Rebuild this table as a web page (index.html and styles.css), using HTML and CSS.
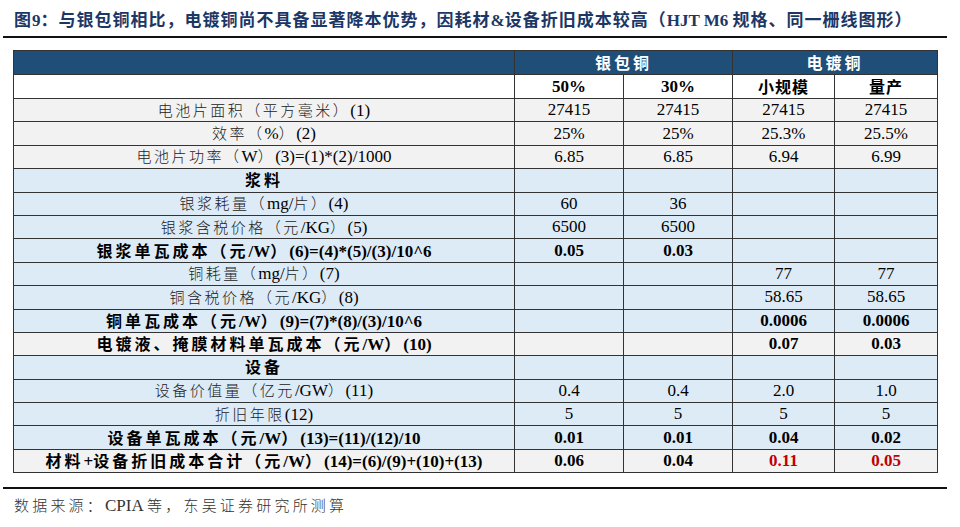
FILE: index.html
```html
<!DOCTYPE html>
<html lang="zh">
<head>
<meta charset="utf-8">
<link rel="stylesheet" href="styles.css">
</head>
<body>
<div class="title"><span class="zh">图</span>9<span class="zh">：与银包铜相比，电镀铜尚不具备显著降本优势，因耗材</span>&amp;<span class="zh">设备折旧成本较高（</span>HJT M6 <span class="zh">规格、同一栅线图形）</span></div>
<div class="rule"></div>
<table class="tbl">
  <colgroup>
    <col class="c0"><col class="c1"><col class="c2"><col class="c3"><col class="c4">
  </colgroup>
  <tr class="h1">
    <td></td>
    <td colspan="2"><span class="zh">银包铜</span></td>
    <td colspan="2"><span class="zh">电镀铜</span></td>
  </tr>
  <tr class="h2">
    <td></td>
    <td>50%</td><td>30%</td><td><span class="zh">小规模</span></td><td><span class="zh">量产</span></td>
  </tr>
  <tr class="g">
    <td><span class="zh">电池片面积（平方毫米）</span>(1)</td>
    <td>27415</td><td>27415</td><td>27415</td><td>27415</td>
  </tr>
  <tr class="g">
    <td><span class="zh">效率（</span>%<span class="zh">）</span>(2)</td>
    <td>25%</td><td>25%</td><td>25.3%</td><td>25.5%</td>
  </tr>
  <tr class="g">
    <td><span class="zh">电池片功率（</span>W<span class="zh">）</span>(3)=(1)*(2)/1000</td>
    <td>6.85</td><td>6.85</td><td>6.94</td><td>6.99</td>
  </tr>
  <tr class="b sec">
    <td><span class="zh">浆料</span></td>
    <td></td><td></td><td></td><td></td>
  </tr>
  <tr class="b">
    <td><span class="zh">银浆耗量（</span>mg/<span class="zh">片）</span>(4)</td>
    <td>60</td><td>36</td><td></td><td></td>
  </tr>
  <tr class="b">
    <td><span class="zh">银浆含税价格（元</span>/KG<span class="zh">）</span>(5)</td>
    <td>6500</td><td>6500</td><td></td><td></td>
  </tr>
  <tr class="b bold">
    <td><span class="zh">银浆单瓦成本（元</span>/W<span class="zh">）</span>(6)=(4)*(5)/(3)/10^6</td>
    <td>0.05</td><td>0.03</td><td></td><td></td>
  </tr>
  <tr class="b">
    <td><span class="zh">铜耗量（</span>mg/<span class="zh">片）</span>(7)</td>
    <td></td><td></td><td>77</td><td>77</td>
  </tr>
  <tr class="b">
    <td><span class="zh">铜含税价格（元</span>/KG<span class="zh">）</span>(8)</td>
    <td></td><td></td><td>58.65</td><td>58.65</td>
  </tr>
  <tr class="b bold">
    <td><span class="zh">铜单瓦成本（元</span>/W<span class="zh">）</span>(9)=(7)*(8)/(3)/10^6</td>
    <td></td><td></td><td>0.0006</td><td>0.0006</td>
  </tr>
  <tr class="g bold">
    <td><span class="zh">电镀液、掩膜材料单瓦成本（元</span>/W<span class="zh">）</span>(10)</td>
    <td></td><td></td><td>0.07</td><td>0.03</td>
  </tr>
  <tr class="b sec">
    <td><span class="zh">设备</span></td>
    <td></td><td></td><td></td><td></td>
  </tr>
  <tr class="b">
    <td><span class="zh">设备价值量（亿元</span>/GW<span class="zh">）</span>(11)</td>
    <td>0.4</td><td>0.4</td><td>2.0</td><td>1.0</td>
  </tr>
  <tr class="b">
    <td><span class="zh">折旧年限</span>(12)</td>
    <td>5</td><td>5</td><td>5</td><td>5</td>
  </tr>
  <tr class="b bold">
    <td><span class="zh">设备单瓦成本（元</span>/W<span class="zh">）</span>(13)=(11)/(12)/10</td>
    <td>0.01</td><td>0.01</td><td>0.04</td><td>0.02</td>
  </tr>
  <tr class="g bold">
    <td><span class="zh">材料</span>+<span class="zh">设备折旧成本合计（元</span>/W<span class="zh">）</span>(14)=(6)/(9)+(10)+(13)</td>
    <td>0.06</td><td>0.04</td><td class="red">0.11</td><td class="red">0.05</td>
  </tr>
</table>
<div class="rule2"></div>
<div class="source"><span class="zh">数据来源：</span>CPIA <span class="zh">等，东吴证券研究所测算</span></div>
</body>
</html>
```

FILE: styles.css
```css
html, body {
  margin: 0;
  padding: 0;
  background: #ffffff;
}
body {
  width: 960px;
  height: 527px;
  overflow: hidden;
  font-family: "Liberation Serif", "Noto Sans CJK SC", serif;
  color: #000;
}
.zh {
  font-family: "Noto Sans CJK SC", sans-serif;
}
.title {
  height: 36px;
  line-height: 38px;
  padding-left: 14px;
  font-size: 17px;
  font-weight: bold;
  color: #1c3766;
  white-space: nowrap;
}
.title .zh {
  letter-spacing: 1px;
}
.rule {
  margin: 0 13px 0 3px;
  border-top: 2px solid #111;
}
.tbl {
  margin: 12px 0 0 13px;
  width: 924px;
  table-layout: fixed;
  border-collapse: collapse;
  border: 1px solid #6b6b6b;
  font-size: 17px;
}
.c0 { width: 501px; }
.c1 { width: 109px; }
.c2 { width: 109px; }
.c3 { width: 102px; }
.c4 { width: 103px; }
.tbl td {
  border: 1px solid #333;
  padding: 0;
  text-align: center;
  vertical-align: middle;
  white-space: nowrap;
  line-height: 20px;
}
.tbl td .zh {
  font-size: 15px;
  font-weight: 300;
  letter-spacing: 2.5px;
  color: #222;
}
.tbl tr { height: 23.4px; }
.tbl tr.h1 { height: 24px; background: #1f4e79; }
.tbl tr.h1 td { color: #fff; font-weight: bold; }
.tbl tr.h1 td .zh { color: #fff; font-size: 16px; letter-spacing: 3px; font-weight: bold; }
.tbl tr.h2 { height: 24px; background: #ffffff; font-weight: bold; }
.tbl tr.h2 td .zh { font-weight: bold; color: #000; font-size: 16px; letter-spacing: 1px; }
.tbl tr.g { background: #f2f2f2; }
.tbl tr.b { background: #ddebf7; }
.tbl tr.bold td { font-weight: bold; }
.tbl tr.bold td .zh { font-weight: bold; color: #000; font-size: 16px; letter-spacing: 3px; }
.tbl tr.sec td .zh { font-weight: bold; color: #000; font-size: 16px; letter-spacing: 3px; }
.tbl td.red { color: #c00000; }
.rule2 {
  margin: 14px 13px 0 3px;
  border-top: 2px solid #111;
}
.source {
  padding: 5px 0 0 14px;
  font-size: 17px;
  color: #333;
  white-space: nowrap;
}
.source .zh {
  font-size: 15px;
  font-weight: 300;
  letter-spacing: 3.2px;
}
```
